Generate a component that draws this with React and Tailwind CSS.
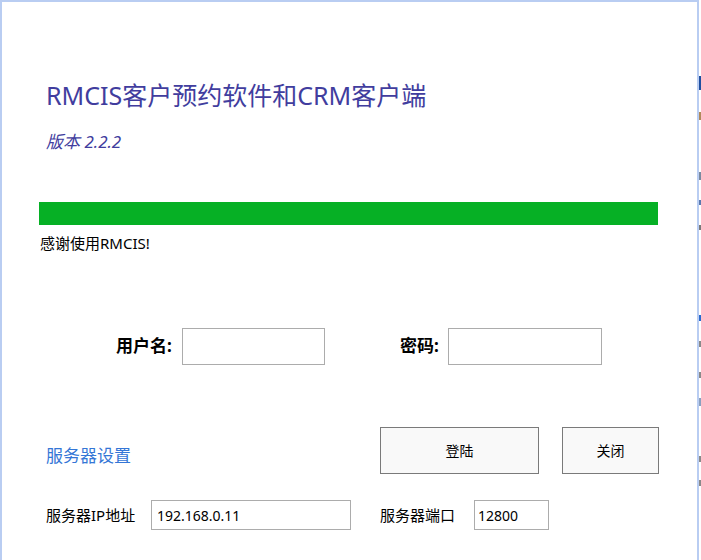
export default function App() {
  const font = { fontFamily: '"Noto Sans", "Noto Sans CJK SC", sans-serif' };
  return (
    <div className="w-[701px] h-[560px] flex bg-white overflow-hidden" style={font}>
      <div className="w-[699px] h-[560px] border-l-2 border-t-2 border-r-2 border-[#b9cdf2] flex flex-col">
        <div className="h-[76px]" />
        <div className="ml-[44px] text-[25px] leading-[34px] text-[#413d9e] whitespace-nowrap">
          RMCIS客户预约软件和CRM客户端
        </div>
        <div className="ml-[44px] mt-[18px] text-[17px] leading-[24px] italic text-[#413d9e]">版本 2.2.2</div>
        <div className="ml-[37px] mt-[48px] w-[619px] h-[23px] bg-[#06b025]" />
        <div className="ml-[38px] mt-[8px] text-[15px] leading-[20px] text-black">感谢使用RMCIS!</div>
        <div className="mt-[75px] flex items-center h-[36px]">
          <div className="ml-[114px] w-[66px] text-[17px] font-bold text-black">用户名:</div>
          <div className="w-[143px] h-[37px] border border-[#acacac] bg-white" />
          <div className="ml-[75px] w-[48px] text-[17px] font-bold text-black">密码:</div>
          <div className="w-[154px] h-[37px] border border-[#acacac] bg-white" />
        </div>
        <div className="mt-[63px] flex items-center">
          <div className="ml-[44px] w-[334px] text-[17px] text-[#3476d6] pt-[11px]">服务器设置</div>
          <div className="w-[159px] h-[47px] border border-[#7a7a7a] bg-[#f9f9f9] flex items-center justify-center text-[14px] text-black">登陆</div>
          <div className="ml-[23px] w-[97px] h-[47px] border border-[#7a7a7a] bg-[#f9f9f9] flex items-center justify-center text-[14px] text-black">关闭</div>
        </div>
        <div className="mt-[26px] flex items-center">
          <div className="ml-[44px] w-[105px] text-[15px] text-black">服务器IP地址</div>
          <div className="w-[200px] h-[30px] border border-[#acacac] bg-white flex items-center px-[5px] text-[14px] text-black">192.168.0.11</div>
          <div className="ml-[29px] w-[94px] text-[15px] text-black">服务器端口</div>
          <div className="w-[75px] h-[30px] border border-[#acacac] bg-white flex items-center px-[3px] text-[14px] text-black">12800</div>
        </div>
      </div>
      <div className="w-[2px] flex flex-col bg-white">
        <div className="h-[76px]" />
        <div className="h-[14px] bg-[#1f4fa0]" />
        <div className="h-[22px]" />
        <div className="h-[8px] bg-[#b08a5a]" />
        <div className="h-[52px]" />
        <div className="h-[8px] bg-[#7a8aa0]" />
        <div className="h-[20px]" />
        <div className="h-[5px] bg-[#5a7ab0]" />
        <div className="h-[20px]" />
        <div className="h-[5px] bg-[#7a7a7a]" />
        <div className="h-[85px]" />
        <div className="h-[6px] bg-[#2a6ad0]" />
        <div className="h-[20px]" />
        <div className="h-[6px] bg-[#8a8a8a]" />
        <div className="h-[25px]" />
        <div className="h-[6px] bg-[#8a8a8a]" />
        <div className="h-[20px]" />
        <div className="h-[8px] bg-[#8aa0c0]" />
        <div className="h-[50px]" />
        <div className="h-[6px] bg-[#8a8a8a]" />
        <div className="h-[18px]" />
        <div className="h-[6px] bg-[#8a8a8a]" />
      </div>
    </div>
  );
}
